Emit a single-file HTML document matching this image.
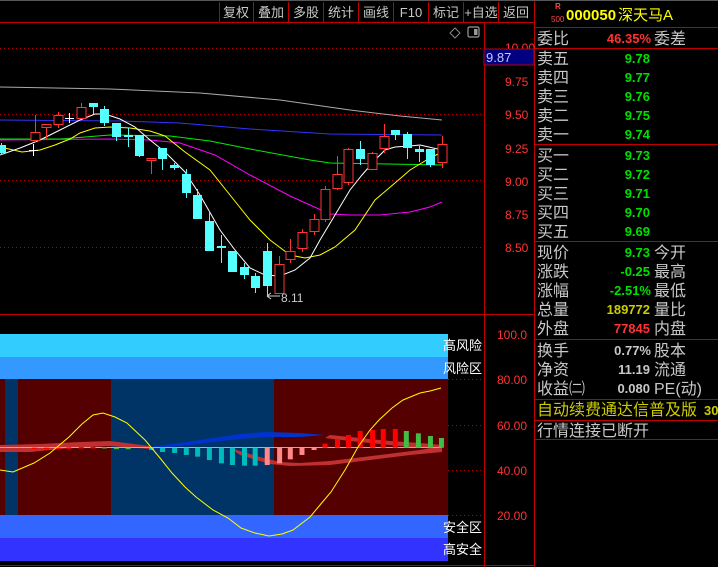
<!DOCTYPE html>
<html><head><meta charset="utf-8"><style>
html,body{margin:0;padding:0;background:#000;width:718px;height:567px;overflow:hidden}
svg{display:block}
text{font-family:"Liberation Sans","Noto Sans CJK SC",sans-serif}
.cj{font-family:"Liberation Sans","WenQuanYi Zen Hei","Noto Sans CJK SC",sans-serif}
</style></head><body>
<svg id="s" width="718" height="567" viewBox="0 0 718 567" xmlns="http://www.w3.org/2000/svg">
<rect width="718" height="567" fill="#000"/>
<!-- bottom bands -->
<rect x="0" y="334" width="448" height="23" fill="#33ccff"/>
<rect x="0" y="357" width="448" height="22" fill="#3399ff"/>
<rect x="0" y="379" width="448" height="136" fill="#550000"/>
<rect x="5" y="379" width="13" height="136" fill="#003366"/>
<rect x="111" y="379" width="163" height="136" fill="#003366"/>
<rect x="0" y="515" width="448" height="23" fill="#3366ff"/>
<rect x="0" y="538" width="448" height="23" fill="#3333ff"/>
<g id="bot"></g>
<g id="main"></g>
<!-- frame lines -->
<g stroke="#c00000" stroke-width="1" fill="none">
<line x1="0" y1="22.5" x2="535" y2="22.5"/>
<line x1="484.5" y1="22" x2="484.5" y2="567"/>
<line x1="0" y1="314.5" x2="535" y2="314.5"/>
<line x1="534.5" y1="0" x2="534.5" y2="567"/>
<line x1="0" y1="565.5" x2="535" y2="565.5"/>
<line x1="219.5" y1="2" x2="219.5" y2="22"/><line x1="253.5" y1="2" x2="253.5" y2="22"/><line x1="288.5" y1="2" x2="288.5" y2="22"/><line x1="323.5" y1="2" x2="323.5" y2="22"/><line x1="358.5" y1="2" x2="358.5" y2="22"/><line x1="393.5" y1="2" x2="393.5" y2="22"/><line x1="428.5" y1="2" x2="428.5" y2="22"/><line x1="463.5" y1="2" x2="463.5" y2="22"/><line x1="498.5" y1="2" x2="498.5" y2="22"/>
<line x1="0" y1="0.5" x2="718" y2="0.5" stroke="#555"/>
<line x1="535" y1="27.5" x2="718" y2="27.5"/><line x1="535" y1="48.5" x2="718" y2="48.5"/><line x1="535" y1="144.5" x2="718" y2="144.5"/><line x1="535" y1="241.5" x2="718" y2="241.5"/><line x1="535" y1="339.5" x2="718" y2="339.5"/><line x1="535" y1="399.5" x2="718" y2="399.5"/><line x1="535" y1="420.5" x2="718" y2="420.5"/><line x1="535" y1="439.5" x2="718" y2="439.5"/>
</g>
<g class="cj" fill="#c8c8c8" font-size="13" text-anchor="middle">
<text x="236" y="17">复权</text><text x="271" y="17">叠加</text><text x="306" y="17">多股</text><text x="341" y="17">统计</text><text x="376" y="17">画线</text><text x="411" y="17">F10</text><text x="446" y="17">标记</text><text x="481" y="17">+自选</text><text x="516" y="17">返回</text>
</g>
<!-- small icons -->
<path d="M455 28 L460 33 L455 38 L450 33 Z" fill="none" stroke="#888"/>
<rect x="468" y="27" width="11" height="10" rx="1.5" fill="none" stroke="#999" stroke-width="1.2"/><rect x="474" y="29" width="3.5" height="6" fill="#999"/>
<!-- price axis -->
<g fill="#ff3333" font-size="12" font-family="Liberation Sans">
<text x="505" y="52">10.00</text><text x="505" y="86">9.75</text><text x="505" y="119">9.50</text><text x="505" y="153">9.25</text><text x="505" y="186">9.00</text><text x="505" y="219">8.75</text><text x="505" y="252">8.50</text>
<text x="497" y="339">100.0</text><text x="497" y="384">80.00</text><text x="497" y="430">60.00</text><text x="497" y="475">40.00</text><text x="497" y="520">20.00</text>
</g>
<rect x="484" y="49" width="50" height="16" fill="#000080" stroke="#c00000"/>
<text x="486" y="62" fill="#c8c8ff" font-size="13">9.87</text>
<g fill="#fff" font-size="13" class="cj">
<text x="443" y="350">高风险</text><text x="443" y="373">风险区</text><text x="443" y="532">安全区</text><text x="443" y="554">高安全</text>
</g>
<text x="281" y="302" fill="#ccc" font-size="12">8.11</text>
<path d="M267 296 L280 296 M267 296 l4 -3 M267 296 l4 3" stroke="#ccc" fill="none"/>
<!-- right panel -->
<text x="555" y="9" fill="#ff4444" font-size="8" font-weight="bold">R</text>
<text x="551" y="22" fill="#ff4444" font-size="8">500</text>
<text x="566" y="20" fill="#ffff00" font-size="15" font-weight="bold">000050</text>
<text x="618" y="20" fill="#ffff00" font-size="15" class="cj">深天马A</text>
<g class="cj" fill="#c8c8c8" font-size="16">
<text x="537" y="44">委比</text><text x="654" y="44">委差</text>
<text x="537" y="64">卖五</text><text x="537" y="83">卖四</text><text x="537" y="102">卖三</text><text x="537" y="121">卖二</text><text x="537" y="140">卖一</text>
<text x="537" y="161">买一</text><text x="537" y="180">买二</text><text x="537" y="199">买三</text><text x="537" y="218">买四</text><text x="537" y="237">买五</text>
<text x="537" y="258">现价</text><text x="654" y="258">今开</text><text x="537" y="277">涨跌</text><text x="654" y="277">最高</text><text x="537" y="296">涨幅</text><text x="654" y="296">最低</text>
<text x="537" y="315">总量</text><text x="654" y="315">量比</text><text x="537" y="334">外盘</text><text x="654" y="334">内盘</text>
<text x="537" y="356">换手</text><text x="654" y="356">股本</text><text x="537" y="375">净资</text><text x="654" y="375">流通</text><text x="537" y="394">收益㈡</text><text x="654" y="394">PE(动)</text>
<text x="537" y="436">行情连接已断开</text>
</g>
<text x="537" y="415" class="cj" fill="#cccc00" font-size="16">自动续费通达信普及版</text>
<text x="704" y="415" fill="#cccc00" font-size="13" font-weight="bold">30</text>
<g font-size="13" font-weight="bold" text-anchor="end" font-family="Liberation Sans">
<text x="651" y="43" fill="#ff3333">46.35%</text>
<g fill="#00e000"><text x="650" y="63">9.78</text><text x="650" y="82">9.77</text><text x="650" y="101">9.76</text><text x="650" y="120">9.75</text><text x="650" y="139">9.74</text>
<text x="650" y="160">9.73</text><text x="650" y="179">9.72</text><text x="650" y="198">9.71</text><text x="650" y="217">9.70</text><text x="650" y="236">9.69</text>
<text x="650" y="257">9.73</text><text x="650" y="276">-0.25</text><text x="651" y="295">-2.51%</text></g>
<text x="650" y="314" fill="#cccc00">189772</text><text x="650" y="333" fill="#ff3333">77845</text>
<g fill="#c8c8c8"><text x="651" y="355">0.77%</text><text x="650" y="374">11.19</text><text x="650" y="393">0.080</text></g>
</g>
</svg>
<script>
var NS="http://www.w3.org/2000/svg";
function el(p,t,a){var e=document.createElementNS(NS,t);for(var k in a)e.setAttribute(k,a[k]);p.appendChild(e);return e;}
var m=document.getElementById("main"),b=document.getElementById("bot");
[48,114,180,247].forEach(function(y){el(m,"line",{x1:0,y1:y+.5,x2:482,y2:y+.5,stroke:"#c00000","stroke-dasharray":"1 3"});});
[379,425,470,515].forEach(function(y){el(b,"line",{x1:448,y1:y+.5,x2:482,y2:y+.5,stroke:"#c00000","stroke-dasharray":"1 3"});});
function pl(g,pts,c,w){el(g,"polyline",{points:pts,fill:"none",stroke:c,"stroke-width":w||1});}
pl(m,"0,87 110,89 200,93 280,100 350,110 400,116 442,120","#aaaaaa");
pl(m,"0,120 120,121 180,123 250,129 330,134 442,135","#3333ff");
pl(m,"0,139 60,139 110,135 170,136 210,141 250,149 310,160 330,163 442,165","#00ee00");
pl(m,"0,140 110,139 150,140 180,143 215,155 250,175 290,196 310,205 330,214 350,215 380,215 410,212 430,207 442,202","#ff00ff");
pl(m,"0,147 22,152 40,150 55,145 70,139 80,133 95,128 110,127 130,128 150,131 165,136 185,152 210,170 230,195 250,220 270,240 290,255 305,258 320,255 335,247 355,230 375,200 395,183 410,170 430,158 442,152","#ffff00");
pl(m,"0,155 20,148 40,140 60,130 80,120 95,114 105,114 120,119 135,127 150,140 165,152 185,172 200,195 220,230 235,250 250,268 265,275 280,276 295,270 310,258 320,240 335,215 350,190 362,175 375,160 385,150 395,147 410,146 420,145 442,150","#ffffff");
var C=[[1,145,153,143,155,0],[33,150,150,144,156,2],[35,140,132,115,142,1],[46,127,124,124,139,1],[58,124,115,112,128,1],[69,118,118,113,123,2],[81,118,107,103,118,1],[93,103,107,103,114,0],[104,109,123,106,126,0],[116,123,137,123,141,0],[128,135,137,128,147,0],[139,135,156,135,157,0],[151,160,158,158,174,1],[162,148,159,148,170,0],[174,165,168,163,170,0],[186,174,193,169,198,0],[197,195,219,189,219,0],[209,221,251,211,251,0],[221,246,248,235,263,0],[232,251,272,251,272,0],[244,267,275,263,279,0],[255,276,288,273,293,0],[267,251,286,243,297,0],[279,293,264,256,293,1],[290,259,251,239,263,1],[302,248,232,229,252,1],[314,231,219,214,235,1],[325,219,189,186,222,1],[337,188,174,156,190,1],[348,182,149,148,185,1],[360,149,159,141,165,0],[372,169,153,152,170,1],[384,148,136,124,153,1],[395,130,135,130,140,0],[407,134,148,132,159,0],[419,149,152,146,162,0],[430,149,165,149,167,0],[442,162,144,136,168,1]];
C.forEach(function(c){var x=c[0],t=Math.min(c[1],c[2]),h=Math.max(Math.abs(c[1]-c[2]),1);
var col=c[5]==1?"#ff3333":(c[5]==2?"#ffffff":"#54ffff");
el(m,"line",{x1:x+.5,y1:c[3],x2:x+.5,y2:c[4],stroke:col});
if(c[5]==1)el(m,"rect",{x:x-4,y:t+.5,width:9,height:h,fill:"#000",stroke:col});
else if(c[5]==2)el(m,"line",{x1:x-4,y1:t+.5,x2:x+5,y2:t+.5,stroke:col});
else el(m,"rect",{x:x-4,y:t,width:9,height:h,fill:col});});
// bottom ribbons
el(b,"polygon",{points:"150,447 200,440 240,434 265,432 300,433 325,435 300,437 265,437 230,440 190,445 150,449",fill:"#0033cc"});
el(b,"polygon",{points:"230,448 260,457 280,462 300,463 330,461 380,455 420,450 442,446 442,452 410,455 370,460 330,465 290,466 270,464 240,455",fill:"#c03030"});
el(b,"polygon",{points:"0,445 40,444 80,442 110,441 150,446 150,449 110,446 70,448 30,452 0,452",fill:"#c03030"});
el(b,"polygon",{points:"330,435 360,438 390,441 420,443 442,445 442,449 410,447 380,444 350,441 325,438",fill:"#c03030"});
el(b,"line",{x1:0,y1:447.5,x2:442,y2:447.5,stroke:"#ff9966","stroke-width":1});
var H=[[100,445,1],[135,444,1],[170,443,1],[200,442,1],[236,441,1],[270,441,1],[303,441,3],[338,443,3],[372,445,3],[440,450,2],[472,456,2],[507,459,2],[541,465,2],[574,470,2],[608,480,2],[643,490,2],[675,495,2],[710,497,2],[741,497,2],[776,495,4],[812,490,4],[843,478,4],[877,465,4],[912,450,4],[944,431,1],[980,417,1],[1012,405,1],[1046,393,1],[1082,390,1],[1113,387,1],[1148,387,1],[1180,393,3],[1215,400,3],[1250,408,3],[1282,414,3]];
var cols={1:"#ff0000",2:"#00bbbb",3:"#44bb44",4:"#ff8888"};
H.forEach(function(h){var x=h[0]/2.904,y=h[1]/3+300,base=447.7;var t=Math.min(y,base),hh=Math.abs(y-base);el(b,"rect",{x:x-2.5,y:t,width:5,height:Math.max(hh,1.5),fill:cols[h[2]]});});
pl(b,"0,470 13,472 34,463 50,453 69,437 82,424 93,415 103,413 115,417 127,423 145,440 160,458 172,473 185,487 196,497 213,510 228,518 241,528 255,533 269,536 282,534 293,530 310,517 320,505 331,492 345,470 358,447 370,430 379,420 392,408 403,400 420,393 430,391 441,388","#ffff00");
</script>
</body></html>
